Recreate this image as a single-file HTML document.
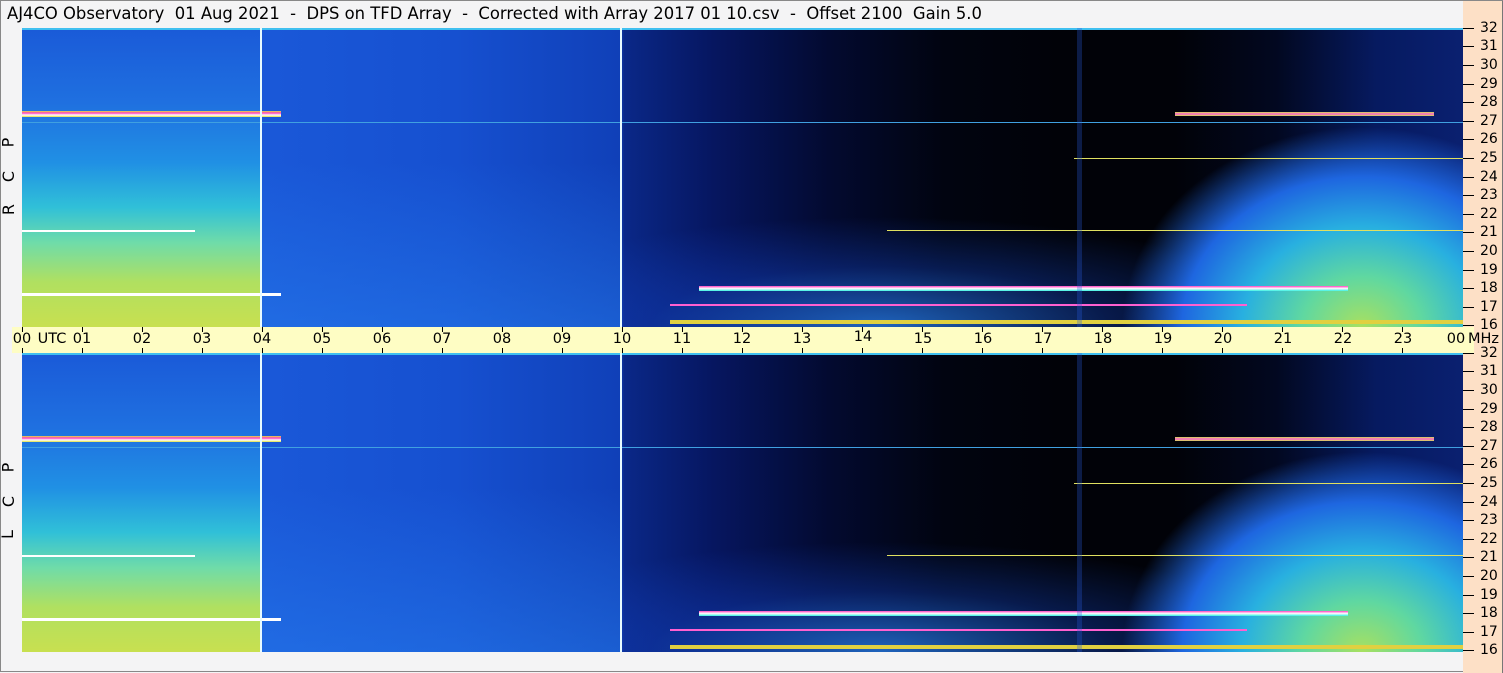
<!DOCTYPE html>
<html><head><meta charset="utf-8"><style>
*{margin:0;padding:0;box-sizing:border-box}
body{width:1503px;height:672px;background:#f4f4f5;position:relative;overflow:hidden;font-family:"DejaVu Sans","Liberation Sans",sans-serif;border:1px solid #888}
.a{position:absolute}
.title{left:6px;top:3px;font-size:16.4px;color:#000;white-space:pre}
.strip{left:1462px;top:0;width:40px;height:672px;background:#fde0c6;border-right:1px solid #777}
.panel{left:21px;width:1441px;height:299px;overflow:hidden;
background:linear-gradient(to right,#1850d0 0%,#1a58d8 16.5%,#1a58d8 17%,#1650d0 30%,#1040b8 41.5%,#0a2888 41.8%,#061660 48%,#030a30 56%,#010410 64%,#010208 72%,#010208 80%,#020820 87%,#061a60 94%,#0a2070 100%)}
.vb{top:0;left:16.6%;width:25%;height:100%;background:linear-gradient(to bottom,rgba(0,0,0,0) 0%,rgba(0,0,0,0) 45%,rgba(40,130,240,.45) 100%)}
.mid{top:0;left:41.6%;width:40%;height:100%;background:radial-gradient(ellipse 420px 110px at 45% 100%,rgba(40,130,240,.75),rgba(20,70,200,.35) 55%,rgba(0,0,0,0) 100%)}
.lft{top:0;left:0;width:16.6%;height:100%;background:linear-gradient(to bottom,#1a5ad8 0%,#1f70e0 25%,#2090e4 45%,#30c0d8 60%,#70dca8 72%,#b0e060 85%,#c8e050 100%)}
.rgt{top:0;left:0;width:100%;height:100%;background:radial-gradient(ellipse 240px 200px at 93% 100%,#a8e060 0%,#60d8a0 25%,#28b0e0 50%,#1e66e0 75%,rgba(20,60,200,0) 100%)}
.vl{top:0;width:2px;height:100%;background:#e8fbff}
.hl{height:2px}
.axis{left:11px;top:326px;width:1462px;height:26px;background:#fefdc4}
.lbl{font-size:14.5px;color:#000;top:4px;white-space:nowrap;transform:translateX(-50%)}
.tk{width:1px;height:5px;background:#000}
.fq{left:1462px;width:41px;height:14px}
.fq i{position:absolute;left:0;top:6px;width:11px;height:1px;background:#000}
.fq b{position:absolute;left:17px;top:-2px;font-weight:normal;font-size:14px}
.side{font-size:16px;transform:rotate(-90deg);left:2px}
</style></head><body>
<div class="a strip"></div>
<div class="a title">AJ4CO Observatory  01 Aug 2021  -  DPS on TFD Array  -  Corrected with Array 2017 01 10.csv  -  Offset 2100  Gain 5.0</div>

<div class="a side" style="top:132px">P</div>
<div class="a side" style="top:166px">C</div>
<div class="a side" style="top:199px">R</div>
<div class="a side" style="top:457px">P</div>
<div class="a side" style="top:491px">C</div>
<div class="a side" style="top:524px">L</div>

<div class="a panel" style="top:27px">
<div class="a vb"></div><div class="a mid"></div><div class="a rgt"></div><div class="a lft"></div>
<div class="a hl" style="top:0;left:0;width:100%;background:#40c0f0"></div>
<div class="a hl" style="top:83px;left:0;width:18%;height:6px;background:linear-gradient(#e0e040,#ff40c0,#fff,#e0e040)"></div>
<div class="a hl" style="top:94px;left:0;width:100%;height:1px;background:#40a0e0"></div>
<div class="a hl" style="top:84px;left:80%;width:18%;height:4px;background:linear-gradient(#d0e050,#ff60d0,#d0e050)"></div>
<div class="a hl" style="top:130px;left:73%;width:27%;height:1px;background:#e0e060"></div>
<div class="a hl" style="top:202px;left:0;width:12%;background:#fff"></div>
<div class="a hl" style="top:202px;left:60%;width:40%;height:1px;background:#e0e060"></div>
<div class="a hl" style="top:258px;left:47%;width:45%;height:5px;background:linear-gradient(#ff40c0,#fff,#30f0e0)"></div>
<div class="a hl" style="top:276px;left:45%;width:40%;height:2px;background:#ff60d0"></div>
<div class="a hl" style="top:265px;left:0;width:18%;height:3px;background:#fff"></div>
<div class="a hl" style="top:292px;left:45%;width:55%;height:4px;background:#e0d040"></div>
<div class="a" style="top:0;left:73.2%;width:5px;height:100%;background:rgba(40,90,220,.3)"></div>
<div class="a vl" style="left:238px"></div>
<div class="a vl" style="left:598px"></div>
</div>

<div class="a axis">
<div class="a lbl" style="left:10px">00</div><div class="a lbl" style="left:40px">UTC</div>
<div class="a lbl" style="left:70px">01</div><div class="a lbl" style="left:130px">02</div><div class="a lbl" style="left:190px">03</div><div class="a lbl" style="left:250px">04</div><div class="a lbl" style="left:310px">05</div><div class="a lbl" style="left:370px">06</div><div class="a lbl" style="left:430px">07</div><div class="a lbl" style="left:490px">08</div><div class="a lbl" style="left:550px">09</div><div class="a lbl" style="left:610px">10</div><div class="a lbl" style="left:670px">11</div><div class="a lbl" style="left:730px">12</div><div class="a lbl" style="left:790px">13</div><div class="a lbl" style="left:851px;top:2px">14</div><div class="a lbl" style="left:911px">15</div><div class="a lbl" style="left:971px">16</div><div class="a lbl" style="left:1031px">17</div><div class="a lbl" style="left:1091px">18</div><div class="a lbl" style="left:1151px">19</div><div class="a lbl" style="left:1211px">20</div><div class="a lbl" style="left:1271px">21</div><div class="a lbl" style="left:1331px">22</div><div class="a lbl" style="left:1391px">23</div><div class="a lbl" style="left:1444px">00</div>
<div class="a lbl" style="transform:none;left:1456px">MHz</div>
</div>
<div class="a" style="left:0;top:326px;width:1503px;height:26px;pointer-events:none">
<div class="a tk" style="left:21px;top:0"></div><div class="a tk" style="left:21px;top:21px"></div>
<div class="a tk" style="left:81px;top:0"></div><div class="a tk" style="left:81px;top:21px"></div>
<div class="a tk" style="left:141px;top:0"></div><div class="a tk" style="left:141px;top:21px"></div>
<div class="a tk" style="left:201px;top:0"></div><div class="a tk" style="left:201px;top:21px"></div>
<div class="a tk" style="left:261px;top:0"></div><div class="a tk" style="left:261px;top:21px"></div>
<div class="a tk" style="left:321px;top:0"></div><div class="a tk" style="left:321px;top:21px"></div>
<div class="a tk" style="left:381px;top:0"></div><div class="a tk" style="left:381px;top:21px"></div>
<div class="a tk" style="left:441px;top:0"></div><div class="a tk" style="left:441px;top:21px"></div>
<div class="a tk" style="left:501px;top:0"></div><div class="a tk" style="left:501px;top:21px"></div>
<div class="a tk" style="left:561px;top:0"></div><div class="a tk" style="left:561px;top:21px"></div>
<div class="a tk" style="left:621px;top:0"></div><div class="a tk" style="left:621px;top:21px"></div>
<div class="a tk" style="left:681px;top:0"></div><div class="a tk" style="left:681px;top:21px"></div>
<div class="a tk" style="left:741px;top:0"></div><div class="a tk" style="left:741px;top:21px"></div>
<div class="a tk" style="left:801px;top:0"></div><div class="a tk" style="left:801px;top:21px"></div>
<div class="a tk" style="left:861px;top:0"></div><div class="a tk" style="left:861px;top:21px"></div>
<div class="a tk" style="left:921px;top:0"></div><div class="a tk" style="left:921px;top:21px"></div>
<div class="a tk" style="left:981px;top:0"></div><div class="a tk" style="left:981px;top:21px"></div>
<div class="a tk" style="left:1041px;top:0"></div><div class="a tk" style="left:1041px;top:21px"></div>
<div class="a tk" style="left:1101px;top:0"></div><div class="a tk" style="left:1101px;top:21px"></div>
<div class="a tk" style="left:1161px;top:0"></div><div class="a tk" style="left:1161px;top:21px"></div>
<div class="a tk" style="left:1221px;top:0"></div><div class="a tk" style="left:1221px;top:21px"></div>
<div class="a tk" style="left:1281px;top:0"></div><div class="a tk" style="left:1281px;top:21px"></div>
<div class="a tk" style="left:1341px;top:0"></div><div class="a tk" style="left:1341px;top:21px"></div>
<div class="a tk" style="left:1401px;top:0"></div><div class="a tk" style="left:1401px;top:21px"></div>
</div>

<div class="a panel" style="top:352px">
<div class="a vb"></div><div class="a mid"></div><div class="a rgt"></div><div class="a lft"></div>
<div class="a hl" style="top:0;left:0;width:100%;background:#40c0f0"></div>
<div class="a hl" style="top:83px;left:0;width:18%;height:6px;background:linear-gradient(#e0e040,#ff40c0,#fff,#e0e040)"></div>
<div class="a hl" style="top:94px;left:0;width:100%;height:1px;background:#40a0e0"></div>
<div class="a hl" style="top:84px;left:80%;width:18%;height:4px;background:linear-gradient(#d0e050,#ff60d0,#d0e050)"></div>
<div class="a hl" style="top:130px;left:73%;width:27%;height:1px;background:#e0e060"></div>
<div class="a hl" style="top:202px;left:0;width:12%;background:#fff"></div>
<div class="a hl" style="top:202px;left:60%;width:40%;height:1px;background:#e0e060"></div>
<div class="a hl" style="top:258px;left:47%;width:45%;height:5px;background:linear-gradient(#ff40c0,#fff,#30f0e0)"></div>
<div class="a hl" style="top:276px;left:45%;width:40%;height:2px;background:#ff60d0"></div>
<div class="a hl" style="top:265px;left:0;width:18%;height:3px;background:#fff"></div>
<div class="a hl" style="top:292px;left:45%;width:55%;height:4px;background:#e0d040"></div>
<div class="a" style="top:0;left:73.2%;width:5px;height:100%;background:rgba(40,90,220,.3)"></div>
<div class="a vl" style="left:238px"></div>
<div class="a vl" style="left:598px"></div>
</div>

<div class="a fq" style="top:21px"><i></i><b>32</b></div>
<div class="a fq" style="top:39px"><i></i><b>31</b></div>
<div class="a fq" style="top:58px"><i></i><b>30</b></div>
<div class="a fq" style="top:77px"><i></i><b>29</b></div>
<div class="a fq" style="top:95px"><i></i><b>28</b></div>
<div class="a fq" style="top:114px"><i></i><b>27</b></div>
<div class="a fq" style="top:132px"><i></i><b>26</b></div>
<div class="a fq" style="top:151px"><i></i><b>25</b></div>
<div class="a fq" style="top:170px"><i></i><b>24</b></div>
<div class="a fq" style="top:188px"><i></i><b>23</b></div>
<div class="a fq" style="top:207px"><i></i><b>22</b></div>
<div class="a fq" style="top:225px"><i></i><b>21</b></div>
<div class="a fq" style="top:244px"><i></i><b>20</b></div>
<div class="a fq" style="top:263px"><i></i><b>19</b></div>
<div class="a fq" style="top:281px"><i></i><b>18</b></div>
<div class="a fq" style="top:300px"><i></i><b>17</b></div>
<div class="a fq" style="top:318px"><i></i><b>16</b></div>
<div class="a fq" style="top:346px"><i></i><b>32</b></div>
<div class="a fq" style="top:364px"><i></i><b>31</b></div>
<div class="a fq" style="top:383px"><i></i><b>30</b></div>
<div class="a fq" style="top:402px"><i></i><b>29</b></div>
<div class="a fq" style="top:420px"><i></i><b>28</b></div>
<div class="a fq" style="top:439px"><i></i><b>27</b></div>
<div class="a fq" style="top:457px"><i></i><b>26</b></div>
<div class="a fq" style="top:476px"><i></i><b>25</b></div>
<div class="a fq" style="top:495px"><i></i><b>24</b></div>
<div class="a fq" style="top:513px"><i></i><b>23</b></div>
<div class="a fq" style="top:532px"><i></i><b>22</b></div>
<div class="a fq" style="top:550px"><i></i><b>21</b></div>
<div class="a fq" style="top:569px"><i></i><b>20</b></div>
<div class="a fq" style="top:588px"><i></i><b>19</b></div>
<div class="a fq" style="top:606px"><i></i><b>18</b></div>
<div class="a fq" style="top:625px"><i></i><b>17</b></div>
<div class="a fq" style="top:643px"><i></i><b>16</b></div>
</body></html>
